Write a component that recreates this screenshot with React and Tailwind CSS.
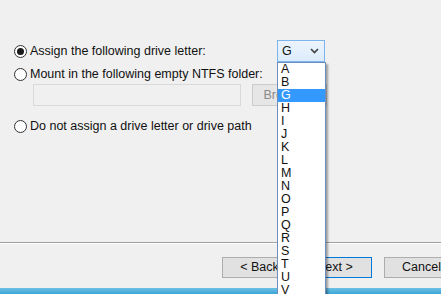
import React from "react";

const letters = ["A","B","G","H","I","J","K","L","M","N","O","P","Q","R","S","T","U","V"];

function Radio({ checked }) {
  return (
    <span className="w-[13px] h-[13px] rounded-full border border-[#333333] bg-white flex items-center justify-center shrink-0">
      {checked && <span className="w-[7px] h-[7px] rounded-full bg-[#1a1a1a]" />}
    </span>
  );
}

export default function App() {
  return (
    <div
      className="relative w-[441px] h-[294px] overflow-hidden bg-[#f0f0f0] flex flex-col text-[12.5px] text-[#111111]"
      style={{ fontFamily: '"Liberation Sans", Arial, sans-serif' }}
    >
      <div className="flex-1 flex flex-col pt-[40px] pl-[14px]">
        <div className="flex items-center h-[22px]">
          <div className="w-[263px] flex items-center gap-[3px]">
            <Radio checked />
            <span>Assign the following drive letter:</span>
          </div>
          <div className="w-[48px] h-[22px] border border-[#7eb4ea] bg-[linear-gradient(#ecf4fc,#dcecfc)] flex items-center justify-between pl-[4px] pr-[5px]">
            <span>G</span>
            <svg width="9" height="6" viewBox="0 0 9 6">
              <path d="M1 1 L4.5 4.5 L8 1" stroke="#404040" strokeWidth="1.6" fill="none" />
            </svg>
          </div>
        </div>
        <div className="flex items-center h-[16px] mt-[4px] gap-[3px]">
          <Radio />
          <span>Mount in the following empty NTFS folder:</span>
        </div>
        <div className="flex mt-[2px] ml-[19px] gap-[11px]">
          <div className="w-[208px] h-[22px] border border-[#d9d9d9] bg-[#f0f0f0]" />
          <div className="w-[75px] h-[22px] border border-[#cccccc] bg-[#e6e6e6] text-[#8a8a8a] flex items-center justify-center">
            Browse...
          </div>
        </div>
        <div className="flex items-center h-[16px] mt-[12px] gap-[3px]">
          <Radio />
          <span>Do not assign a drive letter or drive path</span>
        </div>
      </div>

      <div className="h-[52px] flex flex-col shrink-0">
        <div className="h-px bg-[#a0a0a0]" />
        <div className="h-px bg-white" />
        <div className="flex pl-[222px] mt-[13px]">
          <div className="w-[75px] h-[21px] shrink-0 border border-[#adadad] bg-[#e1e1e1] flex items-center justify-center">
            &lt; Back
          </div>
          <div className="w-[75px] h-[21px] shrink-0 border border-[#0078d7] bg-[#e1e1e1] flex items-center justify-center">
            Next &gt;
          </div>
          <div className="w-[75px] h-[21px] shrink-0 ml-[12px] border border-[#adadad] bg-[#e1e1e1] flex items-center justify-center">
            Cancel
          </div>
        </div>
        <div className="flex-1" />
        <div className="h-[6px] bg-[linear-gradient(#6cc0e4,#3da6d6)]" />
      </div>

      <div className="absolute left-[277px] top-[62px] w-[49px] h-[240px] bg-white border border-[#6d8fbf] shadow-[2px_2px_2px_rgba(0,0,0,0.35)]">
        {letters.map((l) => (
          <div
            key={l}
            className={
              "h-[13px] leading-[13px] pl-[3px] " +
              (l === "G" ? "bg-[#3399ff] text-white" : "")
            }
          >
            {l}
          </div>
        ))}
      </div>
    </div>
  );
}
